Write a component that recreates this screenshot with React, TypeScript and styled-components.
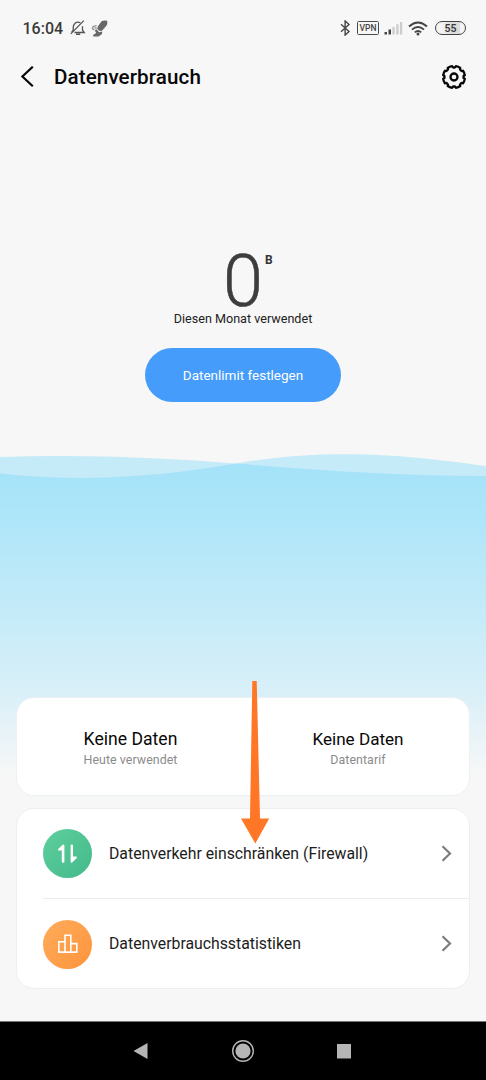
import React from "react";
import styled, { createGlobalStyle } from "styled-components";

const GlobalStyle = createGlobalStyle`
  * { box-sizing: border-box; }
  body { margin: 0; background: #f7f7f7; }
`;

const Screen = styled.main`
  position: relative;
  width: 486px;
  height: 1080px;
  display: flex;
  flex-direction: column;
  overflow: hidden;
  background: #f7f7f7;
  color: #111;
  font-family: Roboto, "Liberation Sans", sans-serif;
`;

const Water = styled.svg`
  position: absolute;
  top: 440px;
  left: 0;
`;

const StatusBar = styled.div`
  position: relative;
  display: flex;
  align-items: center;
  height: 56px;
  padding: 0 20px 0 22.5px;
`;

const Clock = styled.span`
  width: 47.5px;
  font-size: 16px;
  line-height: 20px;
  font-weight: 500;
  padding-top: 2px;
  color: #3b3b3b;
`;

const StatusGroup = styled.div<{ $end?: boolean }>`
  display: flex;
  align-items: center;
  gap: 5px;
  margin-left: ${(p) => (p.$end ? "auto" : "0")};
`;

const VpnBadge = styled.span`
  width: 22px;
  height: 14px;
  border: 1px solid #4a4a4a;
  border-radius: 1.5px;
  font-size: 8.5px;
  line-height: 13px;
  font-weight: 500;
  text-align: center;
  color: #444;
`;

const Battery = styled.span`
  width: 31px;
  height: 14px;
  margin-left: 2px;
  border: 1.5px solid #444;
  border-radius: 7px;
  background: linear-gradient(90deg, #f4f4f4 0 20%, #dcdcdc 55% 83%, #f4f4f4 83%);
  font-size: 10.5px;
  line-height: 13px;
  font-weight: 600;
  text-align: center;
  color: #3b3b3b;
`;

const Header = styled.header`
  position: relative;
  display: flex;
  align-items: center;
  height: 42px;
  padding: 0 19px 0 20px;
`;

const Title = styled.h1`
  flex: 1;
  margin: 0 0 0 19px;
  font-size: 20.6px;
  line-height: 24px;
  font-weight: 500;
  letter-spacing: 0.1px;
  color: #080808;
`;

const Usage = styled.section`
  position: relative;
  display: flex;
  flex-direction: column;
  align-items: center;
  height: 599px;
  padding-top: 147px;
`;

const Amount = styled.div`
  display: flex;
  align-items: flex-start;
  height: 65px;
  padding-left: 29px;
`;

const AmountValue = styled.span`
  width: 42px;
  font-size: 72px;
  line-height: 73px;
  font-weight: 300;
  text-align: center;
  color: #3d3d3d;
  -webkit-text-stroke: 0.5px #3d3d3d;
`;

const AmountUnit = styled.span`
  width: 29px;
  padding: 8px 0 0 1px;
  font-size: 12px;
  line-height: 14px;
  font-weight: 700;
  color: #333;
`;

const AmountLabel = styled.p`
  margin: 0;
  font-size: 12.6px;
  line-height: 18px;
  color: #222;
`;

const LimitButton = styled.button`
  width: 196px;
  height: 54px;
  margin-top: 20px;
  padding: 0;
  border: 0;
  border-radius: 27px;
  background: #459cfa;
  color: #fff;
  font: 400 13.5px/54px Roboto, "Liberation Sans", sans-serif;
`;

const Card = styled.section`
  position: relative;
  margin: 0 16px 12px;
  border: 1px solid #eeeeee;
  border-radius: 18px;
  background: #fff;
`;

const Summary = styled(Card)`
  display: grid;
  grid-template-columns: 227px 228px;
  height: 99px;
  border-color: #eaf1f3;
`;

const Stat = styled.div`
  display: flex;
  flex-direction: column;
  align-items: center;
  padding-top: 29px;
`;

const StatValue = styled.strong<{ $size?: number }>`
  font-size: ${(p) => p.$size ?? 17.6}px;
  line-height: 24px;
  font-weight: 400;
  color: #080808;
`;

const StatLabel = styled.span`
  font-size: 12.4px;
  line-height: 17px;
  letter-spacing: 0.06px;
  color: #8b8b8b;
`;

const Menu = styled(Card)`
  height: 181px;
`;

const MenuRow = styled.a`
  display: flex;
  align-items: center;
  height: 89px;
  margin-left: 26px;
  padding-right: 15.5px;

  & + & {
    height: 91px;
    border-top: 1px solid #ebebeb;
  }
`;

const Badge = styled.span<{ $from: string; $to: string }>`
  display: flex;
  width: 49px;
  height: 49px;
  border-radius: 50%;
  background: linear-gradient(135deg, ${(p) => p.$from}, ${(p) => p.$to});
`;

const MenuLabel = styled.span`
  flex: 1;
  margin-left: 17px;
  font-size: 15.8px;
  line-height: 22px;
  color: #1c1c1c;
`;

const NavBar = styled.nav`
  position: relative;
  display: flex;
  justify-content: space-between;
  align-items: center;
  height: 59px;
  margin-top: auto;
  padding: 0 130px 0 129px;
  border-top: 1px solid #777;
  background: #000;
`;

const Pointer = styled.svg`
  position: absolute;
  top: 680px;
  left: 238px;
`;

const Chevron = () => (
  <svg width="14" height="20" viewBox="0 0 14 20" fill="none" stroke="#7c7c7c" strokeWidth="2.2">
    <path d="M2.5 2.3 10 9.5 2.5 16.7" />
  </svg>
);

const MutedBell = () => (
  <svg width="16" height="18" viewBox="0 0 16 18" fill="none" stroke="#555" strokeWidth="1.3">
    <path d="M10.3 3.7C5.8 2 3.2 5 3.2 8.8v2.4L1.6 13.4M4.5 13.5h9.8l-1.8-2.3V7.2M.8 14.9 13.8 1.6" />
    <path d="M6 15.2h4.2" strokeWidth="1.6" />
  </svg>
);

const Cleaner = () => (
  <svg width="17" height="17" viewBox="0 0 17 17" fill="#686868">
    <path d="M10.6 1.2Q13-.2 16.1.8 17 4 14.9 6.2L11 10.8 8.4 11 6 8.4 7.6 5.2ZM5.6 9.2 8 12.2 11.2 11.6 11 14 7.6 16.4H2.4L2 15 5.2 13 3.8 10.4Z" />
    <path d="M5.6 5.7 2.1 6.4 1.4 8.8 3.4 10M5.6 7.9 3.4 8.2" fill="none" stroke="#888" strokeWidth="1.2" />
  </svg>
);

const Bluetooth = () => (
  <svg width="12" height="16" viewBox="0 0 12 16" fill="none" stroke="#484848" strokeWidth="1.4">
    <path d="m1 4.2 8 7.3-3.9 3.6V.9L9 4.5l-8 7.3" />
  </svg>
);

const Signal = () => (
  <svg width="19" height="14" viewBox="0 0 19 14">
    <path d="M.5 11h2.5v2.5H.5zM4.5 8.4h2.5v5.1H4.5z" fill="#444" />
    <path d="M8.4 6h2.3v7.5H8.4zM12.2 3.3h2.3v10.2h-2.3zM15.9 1h2.3v12.5h-2.3z" fill="#ccc" />
  </svg>
);

const Wifi = () => (
  <svg width="20" height="15" viewBox="0 0 20 15" fill="none" stroke="#444" strokeWidth="1.9">
    <path d="M1 5.5Q10-2.5 19 5.5M4 8.6Q10 3.3 16 8.6M6.8 11.4Q10 8.5 13.2 11.4" />
    <circle cx="10" cy="13.1" r="1.5" fill="#444" stroke="none" />
  </svg>
);

const BackArrow = () => (
  <svg width="15" height="22" viewBox="0 0 15 22" fill="none" stroke="#080808" strokeWidth="2.2">
    <path d="M12.8 .7 2.4 10.5l10.4 9.8" />
  </svg>
);

const polar = (radius: number, degrees: number) => {
  const a = (degrees * Math.PI) / 180;
  return `${(13 + radius * Math.cos(a)).toFixed(2)} ${(13 + radius * Math.sin(a)).toFixed(2)}`;
};

// Eight teeth, each an outer arc followed by a shallow notch.
const gearPath =
  Array.from({ length: 8 }, (_, i) => {
    const a = i * 45;
    return `${i ? "L" : "M"}${polar(11, a + 10)}A11 11 0 0 1 ${polar(11, a + 35)}Q${polar(9.3, a + 37)} ${polar(9.6, a + 45)}Q${polar(9.3, a + 53)} ${polar(11, a + 55)}`;
  }).join("") + "Z";

const Gear = () => (
  <svg width="26" height="26" viewBox="0 0 26 26" fill="none" stroke="#080808" strokeWidth="2.3" strokeLinejoin="round">
    <path d={gearPath} />
    <circle cx="13" cy="13" r="3.5" />
  </svg>
);

const Transfer = () => (
  <svg width="49" height="49" viewBox="0 0 49 49" fill="#fff">
    <path d="M21.4 16.4V32.9q0 .8-1.3.8t-1.3-.8V21.4h-3.2Q14.4 21 15.2 20L19.4 16Q21 14.9 21.4 16.4ZM27.6 32.8V16.4q0-.8 1.2-.8t1.2.8V27.6h3.4Q34.4 28 33.6 29.2L29.4 33.2Q28 34.4 27.6 32.8Z" />
  </svg>
);

const Bars = () => (
  <svg width="49" height="49" viewBox="0 0 49 49" fill="none" stroke="#fff" strokeWidth="1.6">
    <path d="M15.8 21.8h6.2v10.3h-6.2zM22 15.2h5.8v16.9h-5.8zM27.8 23.6h6v8.5h-6z" />
  </svg>
);

export default function App() {
  return (
    <>
      <GlobalStyle />
      <Screen>
        <Water width="486" height="335" viewBox="0 0 486 335">
          <defs>
            <linearGradient id="water" x1="0" y1="20" x2="0" y2="335" gradientUnits="userSpaceOnUse">
              <stop offset="0" stopColor="#a3e2f9" />
              <stop offset="0.2" stopColor="#afe6f9" />
              <stop offset="0.72" stopColor="#d7eff8" />
              <stop offset="1" stopColor="#f7f7f7" />
            </linearGradient>
          </defs>
          <path d="M0 17C85 14 165 18 236 23.5C285 15 326 13.5 363 14.5C415 16 455 22 486 26V60H0Z" fill="#c5eaf8" />
          <path d="M0 33.5C85 43 165 36 236 23.5C325 31 405 36 486 36V335H0Z" fill="url(#water)" />
        </Water>

        <StatusBar>
          <Clock>16:04</Clock>
          <StatusGroup>
            <MutedBell />
            <Cleaner />
          </StatusGroup>
          <StatusGroup $end>
            <Bluetooth />
            <VpnBadge>VPN</VpnBadge>
            <Signal />
            <Wifi />
            <Battery>55</Battery>
          </StatusGroup>
        </StatusBar>

        <Header>
          <BackArrow />
          <Title>Datenverbrauch</Title>
          <Gear />
        </Header>

        <Usage>
          <Amount>
            <AmountValue>0</AmountValue>
            <AmountUnit>B</AmountUnit>
          </Amount>
          <AmountLabel>Diesen Monat verwendet</AmountLabel>
          <LimitButton>Datenlimit festlegen</LimitButton>
        </Usage>

        <Summary>
          <Stat>
            <StatValue>Keine Daten</StatValue>
            <StatLabel>Heute verwendet</StatLabel>
          </Stat>
          <Stat>
            <StatValue $size={17.1}>Keine Daten</StatValue>
            <StatLabel>Datentarif</StatLabel>
          </Stat>
        </Summary>

        <Menu>
          <MenuRow>
            <Badge $from="#5fcf9f" $to="#43b989"><Transfer /></Badge>
            <MenuLabel>Datenverkehr einschränken (Firewall)</MenuLabel>
            <Chevron />
          </MenuRow>
          <MenuRow>
            <Badge $from="#ffac5c" $to="#fd943b"><Bars /></Badge>
            <MenuLabel>Datenverbrauchsstatistiken</MenuLabel>
            <Chevron />
          </MenuRow>
        </Menu>

        <NavBar>
          <svg width="24" height="24" viewBox="0 0 24 24" fill="#b5b5b5">
            <path d="M4.5 12 18.5 4v16Z" />
          </svg>
          <svg width="24" height="24" viewBox="0 0 24 24">
            <circle cx="12" cy="12" r="10.3" fill="none" stroke="#b5b5b5" strokeWidth="1.4" />
            <circle cx="12" cy="12" r="7.6" fill="#b5b5b5" />
          </svg>
          <svg width="24" height="24" viewBox="0 0 24 24" fill="#b5b5b5">
            <path d="M5 5h14v14.5H5z" />
          </svg>
        </NavBar>

        <Pointer width="34" height="165" viewBox="0 0 34 165" fill="#ff7726">
          <path d="M14.3 1h4.4L22 138.5h9.2L17.3 163.5 3 138.5h9Z" />
        </Pointer>
      </Screen>
    </>
  );
}
